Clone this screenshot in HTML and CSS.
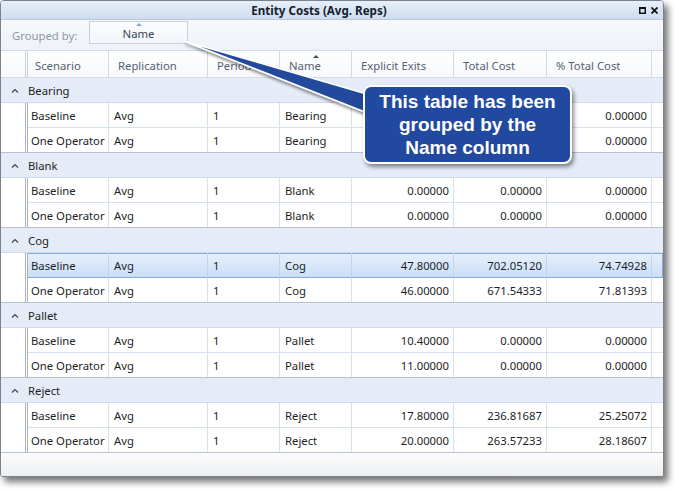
FILE: index.html
```html
<!DOCTYPE html>
<html>
<head>
<meta charset="utf-8">
<link rel="stylesheet" href="styles.css">
</head>
<body>
<div class="stage">
  <div class="window">
    <div class="titlebar">
      <span class="title">Entity Costs (Avg. Reps)</span>
      <span class="winbtns">
        <svg width="7" height="7" viewBox="0 0 7 7"><rect x="0.75" y="0.75" width="5.5" height="5.5" fill="none" stroke="#111" stroke-width="1.5"/><rect x="0" y="0" width="7" height="2" fill="#111"/></svg>
        <svg width="7" height="7" viewBox="0 0 7 7"><path d="M0.5 0.5 L6.5 6.5 M6.5 0.5 L0.5 6.5" stroke="#111" stroke-width="1.8"/></svg>
      </span>
    </div>
    <div class="groupbar">
      <span class="grouplabel">Grouped by:</span>
      <span class="groupchip"><span class="chiparrow"></span>Name</span>
    </div>
    <div class="grid header">
      <div class="indent"></div>
      <div class="hcell first">Scenario</div>
      <div class="hcell">Replication</div>
      <div class="hcell">Period</div>
      <div class="hcell sorted"><span class="sortarrow"></span>Name</div>
      <div class="hcell">Explicit Exits</div>
      <div class="hcell">Total Cost</div>
      <div class="hcell">% Total Cost</div>
      <div class="hcell fill"></div>
    </div>
    <div class="body">
      <div class="group"><svg class="caret" width="8" height="5" viewBox="0 0 8 5"><path d="M1 4.5 L4 1.5 L7 4.5" fill="none" stroke="#444" stroke-width="1.2"/></svg>Bearing</div>
      <div class="grid row"><div class="indent"></div><div class="cell first">Baseline</div><div class="cell">Avg</div><div class="cell">1</div><div class="cell">Bearing</div><div class="cell num"></div><div class="cell num"></div><div class="cell num">0.00000</div><div class="cell fill"></div></div>
      <div class="grid row last"><div class="indent"></div><div class="cell first">One Operator</div><div class="cell">Avg</div><div class="cell">1</div><div class="cell">Bearing</div><div class="cell num"></div><div class="cell num"></div><div class="cell num">0.00000</div><div class="cell fill"></div></div>

      <div class="group"><svg class="caret" width="8" height="5" viewBox="0 0 8 5"><path d="M1 4.5 L4 1.5 L7 4.5" fill="none" stroke="#444" stroke-width="1.2"/></svg>Blank</div>
      <div class="grid row"><div class="indent"></div><div class="cell first">Baseline</div><div class="cell">Avg</div><div class="cell">1</div><div class="cell">Blank</div><div class="cell num">0.00000</div><div class="cell num">0.00000</div><div class="cell num">0.00000</div><div class="cell fill"></div></div>
      <div class="grid row last"><div class="indent"></div><div class="cell first">One Operator</div><div class="cell">Avg</div><div class="cell">1</div><div class="cell">Blank</div><div class="cell num">0.00000</div><div class="cell num">0.00000</div><div class="cell num">0.00000</div><div class="cell fill"></div></div>

      <div class="group"><svg class="caret" width="8" height="5" viewBox="0 0 8 5"><path d="M1 4.5 L4 1.5 L7 4.5" fill="none" stroke="#444" stroke-width="1.2"/></svg>Cog</div>
      <div class="grid row selected"><div class="indent"></div><div class="cell first">Baseline</div><div class="cell">Avg</div><div class="cell">1</div><div class="cell">Cog</div><div class="cell num">47.80000</div><div class="cell num">702.05120</div><div class="cell num">74.74928</div><div class="cell fill"></div></div>
      <div class="grid row last"><div class="indent"></div><div class="cell first">One Operator</div><div class="cell">Avg</div><div class="cell">1</div><div class="cell">Cog</div><div class="cell num">46.00000</div><div class="cell num">671.54333</div><div class="cell num">71.81393</div><div class="cell fill"></div></div>

      <div class="group"><svg class="caret" width="8" height="5" viewBox="0 0 8 5"><path d="M1 4.5 L4 1.5 L7 4.5" fill="none" stroke="#444" stroke-width="1.2"/></svg>Pallet</div>
      <div class="grid row"><div class="indent"></div><div class="cell first">Baseline</div><div class="cell">Avg</div><div class="cell">1</div><div class="cell">Pallet</div><div class="cell num">10.40000</div><div class="cell num">0.00000</div><div class="cell num">0.00000</div><div class="cell fill"></div></div>
      <div class="grid row last"><div class="indent"></div><div class="cell first">One Operator</div><div class="cell">Avg</div><div class="cell">1</div><div class="cell">Pallet</div><div class="cell num">11.00000</div><div class="cell num">0.00000</div><div class="cell num">0.00000</div><div class="cell fill"></div></div>

      <div class="group"><svg class="caret" width="8" height="5" viewBox="0 0 8 5"><path d="M1 4.5 L4 1.5 L7 4.5" fill="none" stroke="#444" stroke-width="1.2"/></svg>Reject</div>
      <div class="grid row"><div class="indent"></div><div class="cell first">Baseline</div><div class="cell">Avg</div><div class="cell">1</div><div class="cell">Reject</div><div class="cell num">17.80000</div><div class="cell num">236.81687</div><div class="cell num">25.25072</div><div class="cell fill"></div></div>
      <div class="grid row last"><div class="indent"></div><div class="cell first">One Operator</div><div class="cell">Avg</div><div class="cell">1</div><div class="cell">Reject</div><div class="cell num">20.00000</div><div class="cell num">263.57233</div><div class="cell num">28.18607</div><div class="cell fill"></div></div>
    </div>
    <div class="footer"></div>
  </div>

  <svg class="pointer" width="679" height="491" viewBox="0 0 679 491">
    <defs>
      <filter id="sh" x="-10%" y="-10%" width="130%" height="150%">
        <feGaussianBlur in="SourceAlpha" stdDeviation="1.5"/>
        <feOffset dx="2" dy="3" result="b"/>
        <feComponentTransfer><feFuncA type="linear" slope="0.45"/></feComponentTransfer>
        <feMerge><feMergeNode/><feMergeNode in="SourceGraphic"/></feMerge>
      </filter>
    </defs>
    <polygon points="184,41 370,95 370,114" fill="#24499c" stroke="#ffffff" stroke-width="1.6" stroke-linejoin="round" filter="url(#sh)"/>
  </svg>
  <div class="callout">This table has been<br>grouped by the<br>Name column</div>
</div>
</body>
</html>
```

FILE: styles.css
```css
* { box-sizing: border-box; }
html, body { margin: 0; padding: 0; background: #ffffff; }
body {
  font-family: "Noto Sans", "DejaVu Sans", sans-serif;
  font-size: 11.3px;
  color: #1e1e1e;
}
.stage {
  position: relative;
  width: 679px;
  height: 491px;
}
.window {
  width: 664px;
  height: 477px;
  border: 1px solid #7b828c;
  border-radius: 4px 4px 3px 3px;
  background: #ffffff;
  box-shadow: 4px 5px 7px rgba(0,0,0,0.55);
  display: flex;
  flex-direction: column;
  overflow: hidden;
}
.titlebar {
  height: 19px;
  flex: none;
  background: linear-gradient(#e7eff9, #cddcef);
  border-bottom: 1px solid #b9c7d8;
  display: flex;
  align-items: center;
  justify-content: center;
  position: relative;
  padding-right: 26px;
}
.title {
  font-weight: bold;
  font-size: 11.6px;
  color: #15202e;
}
.winbtns {
  position: absolute;
  right: 5px;
  top: 6px;
  display: flex;
  gap: 5px;
}
.winbtns svg { display: block; }
.groupbar {
  height: 30px;
  flex: none;
  background: linear-gradient(#f6f8fb, #eef2f7);
  display: flex;
  align-items: center;
  padding-left: 11px;
}
.grouplabel {
  color: #8f99a6;
  width: 77px;
}
.groupchip {
  position: relative;
  width: 99px;
  height: 23px;
  margin-top: -5px;
  border: 1px solid #c7d1de;
  background: linear-gradient(#fbfcfe, #f2f5fa);
  display: flex;
  align-items: center;
  justify-content: center;
  color: #3c4656;
  padding-top: 2px;
}
.chiparrow, .sortarrow {
  position: absolute;
  top: 1px;
  left: 50%;
  margin-left: -3px;
  width: 0;
  height: 0;
  border-left: 3px solid transparent;
  border-right: 3px solid transparent;
  border-bottom: 3px solid #7fa6d6;
}
.sortarrow { border-bottom-color: #444c58; top: 4px; }
.grid {
  display: grid;
  grid-template-columns: 27px 81px 99px 72px 72px 102px 93px 105px 1fr;
  flex: none;
}
.header {
  height: 28px;
  border-top: 1px solid #d3dbe6;
  border-bottom: 1px solid #d3dbe6;
  background: linear-gradient(#ffffff, #f6f8fb);
}
.indent {
  border-right: 3px double #a9b2bf;
}
.header .indent { border-right-color: #c9d1dc; }
.hcell {
  border-right: 1px solid #d3dbe6;
  color: #566170;
  display: flex;
  align-items: center;
  padding-left: 9px;
  padding-top: 2px;
  position: relative;
  white-space: nowrap;
}
.hcell.first { padding-left: 7px; }
.hcell.fill { border-right: none; }
.body { flex: none; }
.group {
  height: 25px;
  background: #e5ecf7;
  border-bottom: 1px solid #cfdaea;
  display: flex;
  align-items: center;
  padding-left: 10px;
  color: #1e1e1e;
}
.caret { margin-right: 9px; margin-top: 1px; }
.row { height: 25px; }
.row.last { border-bottom: 1px solid #b9c2ce; }
.row.last .cell { border-bottom: none; }
.cell {
  border-right: 1px solid #d7e1ef;
  border-bottom: 1px solid #d7e1ef;
  display: flex;
  align-items: center;
  padding-left: 5px;
  white-space: nowrap;
}
.cell.first { padding-left: 3px; }
.cell.num { justify-content: flex-end; padding-right: 4px; padding-left: 0; }
.cell.fill { border-right: none; }
.row.selected {
  background: linear-gradient(#e6f0fc, #c9def7);
  box-shadow: inset 0 0 0 1px #86abd8;
}
.row.selected .indent { background: #ffffff; }
.row.selected .cell { border-bottom-color: transparent; border-right-color: #c3d5ec; }
.footer {
  flex: 1;
  background: linear-gradient(#fcfcfc, #eeeff1);
}
.pointer {
  position: absolute;
  left: 0;
  top: 0;
  pointer-events: none;
}
.callout {
  position: absolute;
  left: 363px;
  top: 85px;
  width: 209px;
  height: 79px;
  background: #2249a0;
  border: 2px solid #ffffff;
  border-radius: 8px;
  box-shadow: 2px 3px 4px rgba(0,0,0,0.45);
  color: #ffffff;
  font-family: "Liberation Sans", Arial, sans-serif;
  font-weight: bold;
  font-size: 19px;
  line-height: 23px;
  text-align: center;
  padding-top: 3px;
}
```
